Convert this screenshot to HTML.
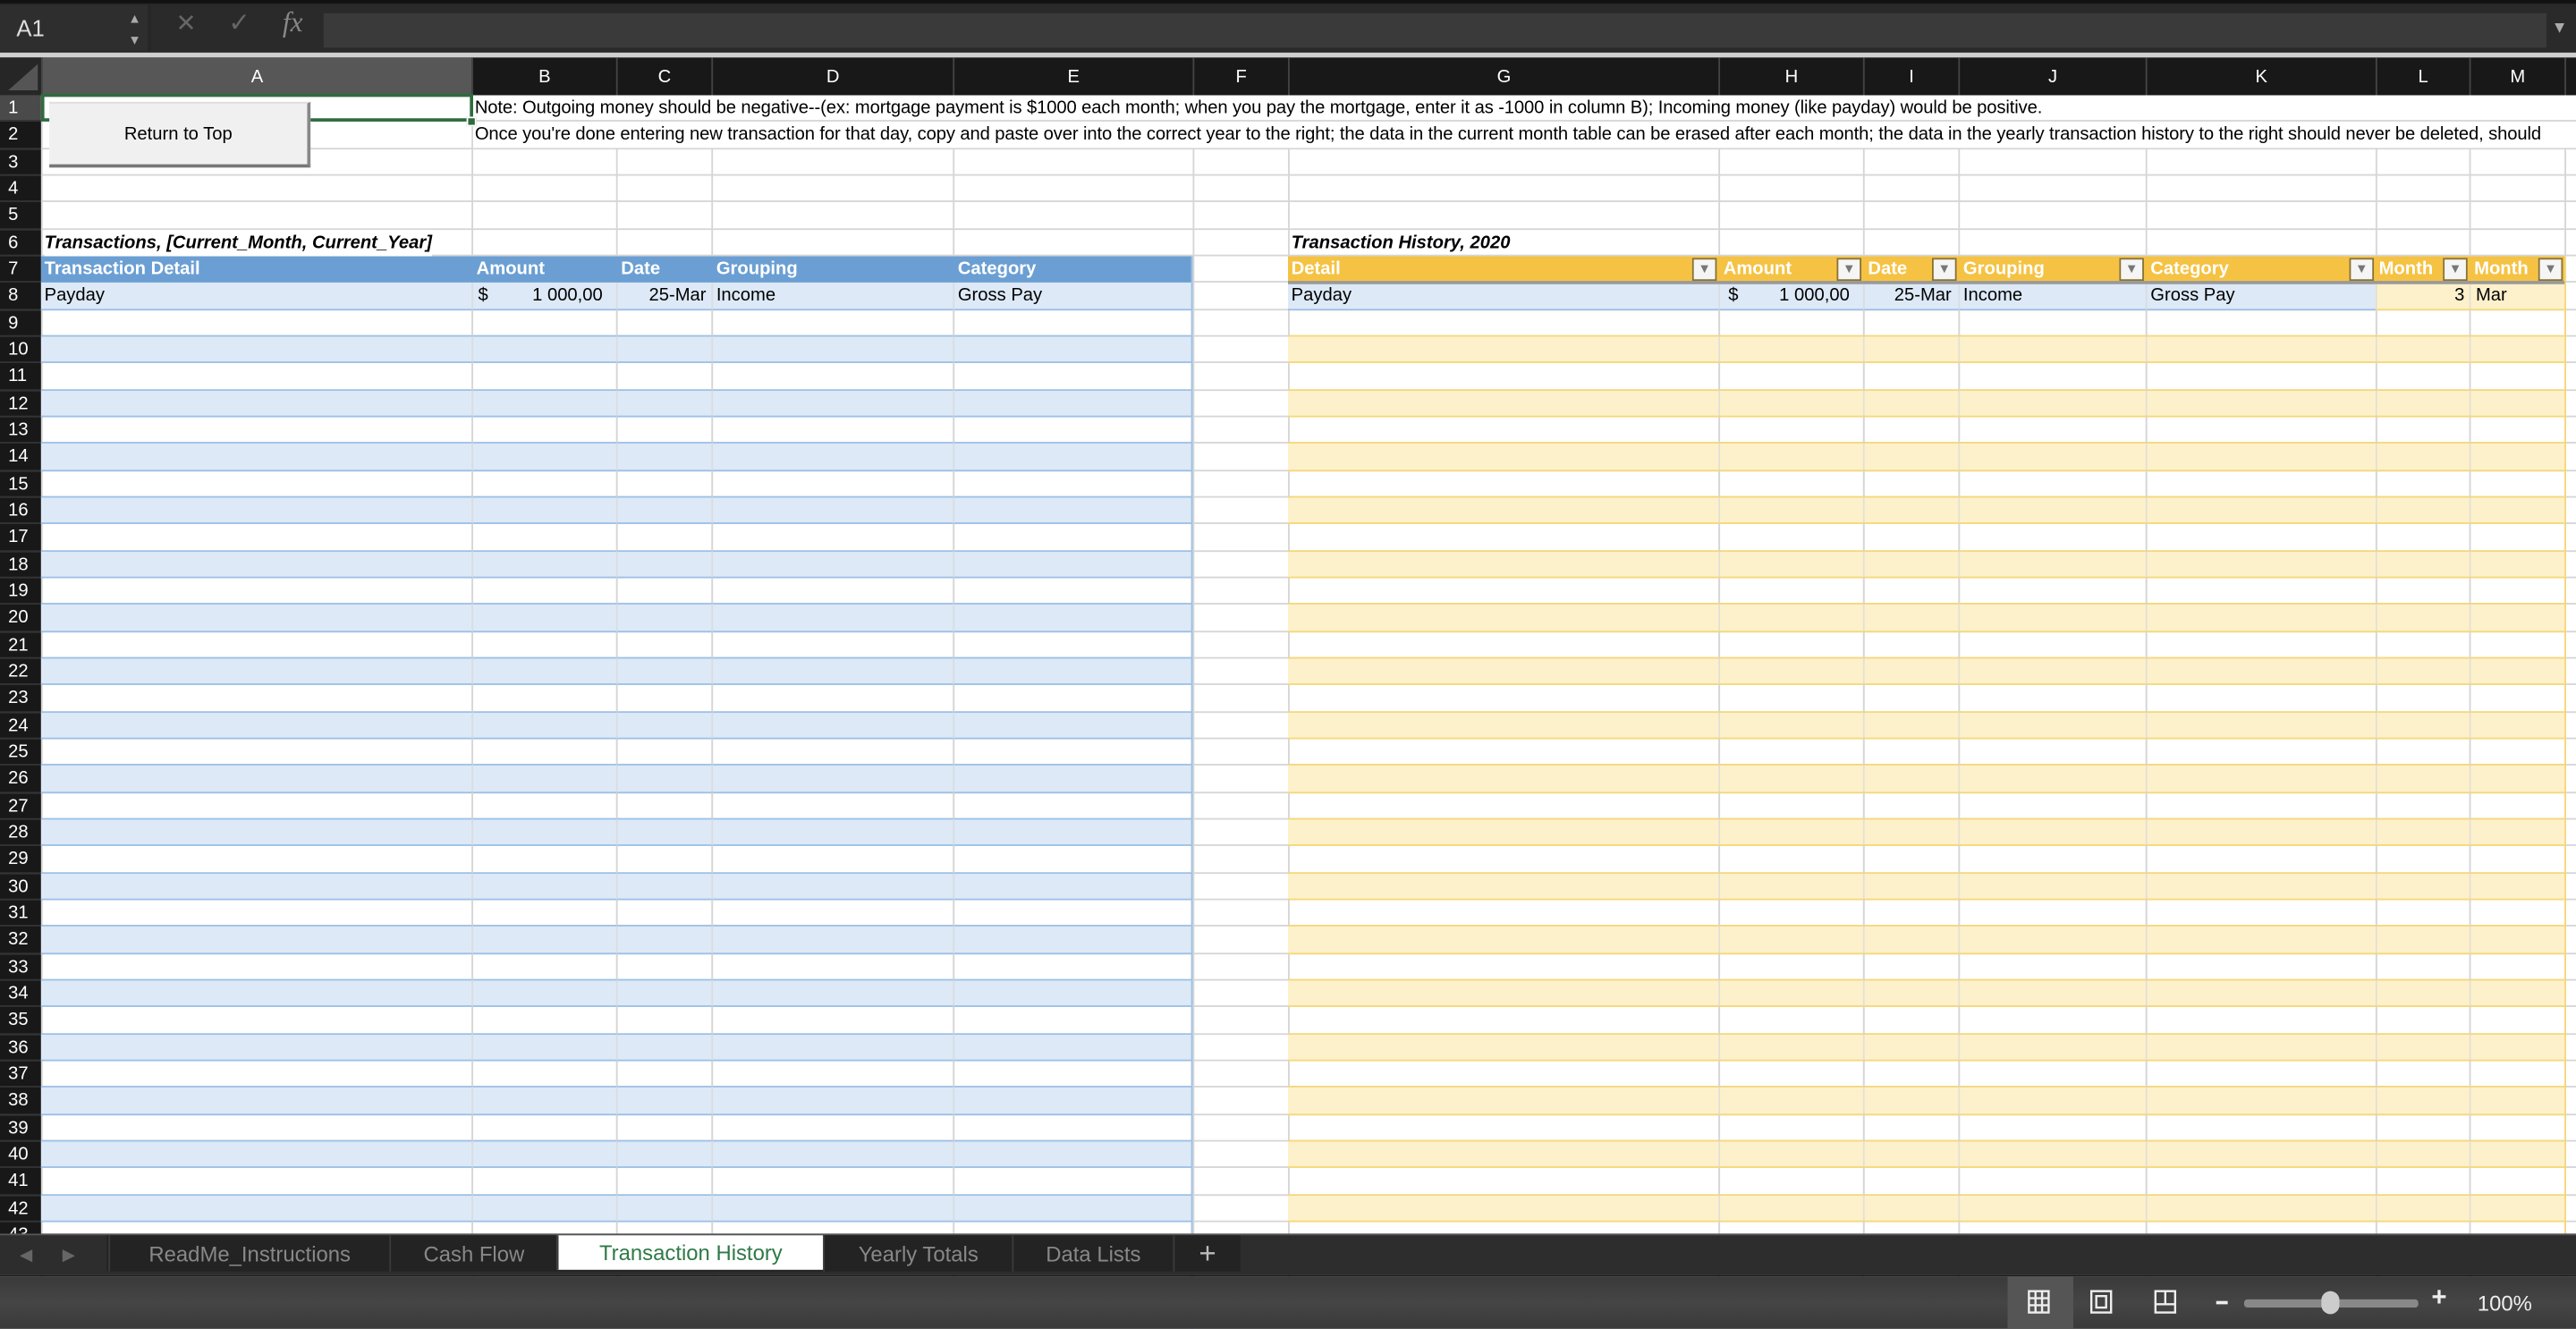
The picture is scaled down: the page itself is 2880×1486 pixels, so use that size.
<!DOCTYPE html>
<html><head><meta charset="utf-8"><style>
html,body{margin:0;padding:0;background:#2b2b2b;overflow:hidden;width:2880px;height:1486px}
#w{position:absolute;left:0;top:0;width:1568px;height:809px;transform:scale(1.836735);transform-origin:0 0;background:#fff;font-family:"Liberation Sans",sans-serif;overflow:hidden}
.a{position:absolute;box-sizing:border-box}
.t{position:absolute;white-space:nowrap;font-size:11px;line-height:16px;color:#000}
</style></head><body><div id="w"></div>
<script>
const W=document.getElementById('w');
function d(x,y,w,h,st,txt){const e=document.createElement('div');e.className='a';e.style.cssText=`left:${x}px;top:${y}px;width:${w}px;height:${h}px;`+(st||'');if(txt!==undefined)e.innerHTML=txt;W.appendChild(e);return e;}
function t(x,y,txt,st){const e=document.createElement('div');e.className='t';e.style.cssText=`left:${x}px;top:${y}px;`+(st||'');e.innerHTML=txt;W.appendChild(e);return e;}
d(0,0,1568,34,'background:#262626;border-top:2px solid #111');
d(0,3,90,28,'background:#2e2e2e');
t(10,9,'A1','color:#ddd;font-size:14px');
t(78,4,'▲','color:#aaa;font-size:8px');t(78,17,'▼','color:#aaa;font-size:8px');
d(92,3,1476,28,'background:#2a2a2a');
t(107,7,'✕','color:#666;font-size:15px');t(139,7,'✓','color:#666;font-size:16px');
t(172,6,'<i>fx</i>','color:#888;font-size:17px;font-family:\"Liberation Serif\",serif');
d(197,8,1353,21,'background:#3a3a3a');
t(1553,10,'▼','color:#aaa;font-size:10px');
d(0,32,1568,3,'background:#cfcfcf');
const cols=[['A',25,287],['B',287,375],['C',375,433],['D',433,580],['E',580,726],['F',726,784],['G',784,1046],['H',1046,1134],['I',1134,1192],['J',1192,1306],['K',1306,1446],['L',1446,1503],['M',1503,1561],['',1561,1600]];
const RH=16.33,R0=58;
d(0,35,1568,23,'background:#181818');
d(0,35,25,23,'background:#262626');
W.insertAdjacentHTML('beforeend','<svg class="a" style="position:absolute;left:4px;top:38px" width="20" height="18"><polygon points="19,1 19,17 1,17" fill="#555"/></svg>');
cols.forEach(c=>{const [n,a,b]=c;d(a,35,b-a,23,'border-left:1px solid #444;display:flex;align-items:center;justify-content:center;color:#fff;font-size:11px;'+(n=='A'?'background:#575757;':''),n);});
for(let r=1;r<=43;r++){const y=R0+(r-1)*RH;d(0,y,25,RH,'background:'+(r==1?'#4a4a4a':'#181818')+';border-bottom:1px solid #333;color:#fff;font-size:11px;padding-left:5px;line-height:16px',''+r);
d(25,y,1543,RH,'border-bottom:1px solid #d6d6d6');}
cols.forEach(c=>{d(c[1],R0,1,750,'background:#d6d6d6');});
d(288,R0,1280,2*RH-1,'background:#fff');
d(288,R0+RH-1,1280,1,'background:#d6d6d6');
t(289,R0,'Note: Outgoing money should be negative--(ex: mortgage payment is $1000 each month; when you pay the mortgage, enter it as -1000 in column B); Incoming money (like payday) would be positive.','font-size:11px;letter-spacing:-0.06px');
t(289,R0+RH,"Once you're done entering new transaction for that day, copy and paste over into the correct year to the right; the data in the current month table can be erased after each month; the data in the yearly transaction history to the right should never be deleted, should",'font-size:11px;letter-spacing:-0.06px');
d(25,R0-1,263,RH+1,'border:2px solid #2f6b3e');
d(284,R0+RH-3,6,6,'background:#2f6b3e;border:1px solid #fff');
d(30,62,159,40,'background:#f0f0f0;border-right:2px solid #888;border-bottom:2px solid #777;border-top:1px solid #ddd;display:flex;align-items:center;justify-content:center;font-size:11px','Return to Top');
t(27,R0+5*RH,'<b><i>Transactions, [Current_Month, Current_Year]</i></b>','background:#fff');
t(786,R0+5*RH,'<b><i>Transaction History, 2020</i></b>');
const ty=R0+6*RH;
d(25,ty,701,RH,'background:#6b9fd3');
[['Transaction Detail',27],['Amount',290],['Date',378],['Grouping',436],['Category',583]].forEach(h=>t(h[1],ty,'<b>'+h[0]+'</b>','color:#fff'));
for(let r=8;r<=43;r++){const y=R0+(r-1)*RH;d(25,y,701,RH,(r%2==0?'background:#dde9f6;':'')+'border-bottom:1px solid #9dc1e7');}
d(725,ty,1,700,'background:#9dc1e7');
[287,375,433,580].forEach(x=>d(x,ty+RH,1,690,'background:#d6d6d6;opacity:.6'));
let y8=R0+7*RH;
t(27,y8,'Payday');t(291,y8,'$');t(324,y8,'1 000,00');t(395,y8,'25-Mar');t(436,y8,'Income');t(583,y8,'Gross Pay');
d(784,ty,777,RH,'background:#f5c243');
[['Detail',786],['Amount',1049],['Date',1137],['Grouping',1195],['Category',1309],['Month',1448],['Month',1506]].forEach(h=>t(h[1],ty,'<b>'+h[0]+'</b>','color:#fff;'+(h[1]==1448?'width:40px;overflow:hidden':'')));
[1030,1118,1176,1290,1430,1487,1545].forEach(x=>{d(x,ty+1,15,14,'background:#f5f5f5;border:1px solid #8a7230;display:flex;align-items:center;justify-content:center;font-size:8px;color:#777','▼');});
for(let r=8;r<=43;r++){const y=R0+(r-1)*RH;d(784,y,777,RH,(r%2==0?'background:#fdf1cc;':'')+'border-bottom:1px solid #f6d878');}
d(1561,ty,1,700,'background:#f6d878');
d(784,y8,662,RH,'background:#dde9f6;border-bottom:1px solid #9dc1e7');
d(784,ty+RH-1,777,2,'background:#999');
[1046,1134,1192,1306,1446,1503].forEach(x=>d(x,ty+RH+1,1,690,'background:#d6d6d6;opacity:.6'));
t(786,y8,'Payday');t(1052,y8,'$');t(1083,y8,'1 000,00');t(1153,y8,'25-Mar');t(1195,y8,'Income');t(1309,y8,'Gross Pay');t(1494,y8,'3');t(1507,y8,'Mar');
d(0,751,1568,25,'background:#2d2d2d;border-top:1px solid #555');
t(12,757,'◀','color:#666;font-size:10px');t(38,757,'▶','color:#666;font-size:10px');
d(65,752,690,22,'background:#232323');
[['ReadMe_Instructions',66,237],['Cash Flow',237,339],['Transaction History',339,501],['Yearly Totals',501,616],['Data Lists',616,714],['+',714,755]].forEach(tb=>{
 const sel=tb[0]=='Transaction History';
 d(tb[1],752,tb[2]-tb[1],sel?21:22,'border-left:1px solid #3a3a3a;display:flex;align-items:center;justify-content:center;font-size:13px;'+(sel?'background:#fff;color:#2f7a47;':'color:#888;')+(tb[0]=='+'?'font-size:18px;color:#bbb;':''),tb[0]);});
d(0,776,1568,33,'background:linear-gradient(#3a3a3a,#454545 50%,#3a3a3a);border-top:1px solid #1a1a1a');
d(1222,777,40,32,'background:#555');
W.insertAdjacentHTML('beforeend',`<svg style="position:absolute;left:1230px;top:784px" width="120" height="18" fill="none" stroke="#eee" stroke-width="1.3">
<rect x="5" y="2" width="12" height="13"/><line x1="5" y1="6.3" x2="17" y2="6.3"/><line x1="5" y1="10.6" x2="17" y2="10.6"/><line x1="9" y1="2" x2="9" y2="15"/><line x1="13" y1="2" x2="13" y2="15"/>
<rect x="43" y="2" width="12" height="13"/><rect x="46" y="5" width="6" height="7"/>
<rect x="82" y="2" width="12" height="13"/><line x1="88" y1="2" x2="88" y2="10"/><line x1="82" y1="10" x2="94" y2="10"/></svg>`);
d(1349,792,7,2,'background:#eee');
d(1366,791,106,5,'background:#888;border-radius:2px');
d(1413,786,11,14,'background:#ccc;border-radius:6px');
t(1480,783,'+','color:#eee;font-size:16px;font-weight:bold');
t(1508,786,'100%','color:#eee;font-size:13px');
</script></body></html>
